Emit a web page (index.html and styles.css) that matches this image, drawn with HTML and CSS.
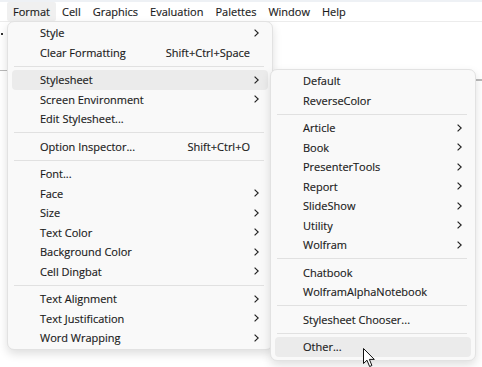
FILE: index.html
```html
<!DOCTYPE html>
<html lang="en">

<head>
    <meta charset="UTF-8">
    <title>Format menu</title>
    <link rel="stylesheet" href="styles.css">
</head>

<body>
    <div class="top-strip"></div>
    <nav class="menubar">
        <span class="menubar-item active">Format</span>
        <span class="menubar-item">Cell</span>
        <span class="menubar-item">Graphics</span>
        <span class="menubar-item">Evaluation</span>
        <span class="menubar-item">Palettes</span>
        <span class="menubar-item">Window</span>
        <span class="menubar-item">Help</span>
    </nav>

    <div class="notebook">
        <span class="cell-dot"></span>
        <span class="cell-line left-line"></span>
        <span class="cell-line right-line"></span>
    </div>

    <!-- Format menu -->
    <div class="menu format-menu">
        <div class="menu-row"><span class="label">Style</span><span class="arrow"><svg width="5" height="8" viewBox="0 0 5 8"><polyline points="0.6,0.6 4.2,4 0.6,7.4" /></svg></span></div>
        <div class="menu-row"><span class="label">Clear Formatting</span><span class="shortcut">Shift+Ctrl+Space</span><span class="arrow"></span></div>
        <div class="separator"></div>
        <div class="menu-row selected"><span class="label">Stylesheet</span><span class="arrow"><svg width="5" height="8" viewBox="0 0 5 8"><polyline points="0.6,0.6 4.2,4 0.6,7.4" /></svg></span></div>
        <div class="menu-row"><span class="label">Screen Environment</span><span class="arrow"><svg width="5" height="8" viewBox="0 0 5 8"><polyline points="0.6,0.6 4.2,4 0.6,7.4" /></svg></span></div>
        <div class="menu-row"><span class="label">Edit Stylesheet...</span><span class="arrow"></span></div>
        <div class="separator"></div>
        <div class="menu-row"><span class="label">Option Inspector...</span><span class="shortcut">Shift+Ctrl+O</span><span class="arrow"></span></div>
        <div class="separator"></div>
        <div class="menu-row"><span class="label">Font...</span><span class="arrow"></span></div>
        <div class="menu-row"><span class="label">Face</span><span class="arrow"><svg width="5" height="8" viewBox="0 0 5 8"><polyline points="0.6,0.6 4.2,4 0.6,7.4" /></svg></span></div>
        <div class="menu-row"><span class="label">Size</span><span class="arrow"><svg width="5" height="8" viewBox="0 0 5 8"><polyline points="0.6,0.6 4.2,4 0.6,7.4" /></svg></span></div>
        <div class="menu-row"><span class="label">Text Color</span><span class="arrow"><svg width="5" height="8" viewBox="0 0 5 8"><polyline points="0.6,0.6 4.2,4 0.6,7.4" /></svg></span></div>
        <div class="menu-row"><span class="label">Background Color</span><span class="arrow"><svg width="5" height="8" viewBox="0 0 5 8"><polyline points="0.6,0.6 4.2,4 0.6,7.4" /></svg></span></div>
        <div class="menu-row"><span class="label">Cell Dingbat</span><span class="arrow"><svg width="5" height="8" viewBox="0 0 5 8"><polyline points="0.6,0.6 4.2,4 0.6,7.4" /></svg></span></div>
        <div class="separator"></div>
        <div class="menu-row"><span class="label">Text Alignment</span><span class="arrow"><svg width="5" height="8" viewBox="0 0 5 8"><polyline points="0.6,0.6 4.2,4 0.6,7.4" /></svg></span></div>
        <div class="menu-row"><span class="label">Text Justification</span><span class="arrow"><svg width="5" height="8" viewBox="0 0 5 8"><polyline points="0.6,0.6 4.2,4 0.6,7.4" /></svg></span></div>
        <div class="menu-row"><span class="label">Word Wrapping</span><span class="arrow"><svg width="5" height="8" viewBox="0 0 5 8"><polyline points="0.6,0.6 4.2,4 0.6,7.4" /></svg></span></div>
    </div>

    <!-- Stylesheet submenu -->
    <div class="menu stylesheet-menu">
        <div class="menu-row"><span class="label">Default</span><span class="arrow"></span></div>
        <div class="menu-row"><span class="label">ReverseColor</span><span class="arrow"></span></div>
        <div class="separator"></div>
        <div class="menu-row"><span class="label">Article</span><span class="arrow"><svg width="5" height="8" viewBox="0 0 5 8"><polyline points="0.6,0.6 4.2,4 0.6,7.4" /></svg></span></div>
        <div class="menu-row"><span class="label">Book</span><span class="arrow"><svg width="5" height="8" viewBox="0 0 5 8"><polyline points="0.6,0.6 4.2,4 0.6,7.4" /></svg></span></div>
        <div class="menu-row"><span class="label">PresenterTools</span><span class="arrow"><svg width="5" height="8" viewBox="0 0 5 8"><polyline points="0.6,0.6 4.2,4 0.6,7.4" /></svg></span></div>
        <div class="menu-row"><span class="label">Report</span><span class="arrow"><svg width="5" height="8" viewBox="0 0 5 8"><polyline points="0.6,0.6 4.2,4 0.6,7.4" /></svg></span></div>
        <div class="menu-row"><span class="label">SlideShow</span><span class="arrow"><svg width="5" height="8" viewBox="0 0 5 8"><polyline points="0.6,0.6 4.2,4 0.6,7.4" /></svg></span></div>
        <div class="menu-row"><span class="label">Utility</span><span class="arrow"><svg width="5" height="8" viewBox="0 0 5 8"><polyline points="0.6,0.6 4.2,4 0.6,7.4" /></svg></span></div>
        <div class="menu-row"><span class="label">Wolfram</span><span class="arrow"><svg width="5" height="8" viewBox="0 0 5 8"><polyline points="0.6,0.6 4.2,4 0.6,7.4" /></svg></span></div>
        <div class="separator"></div>
        <div class="menu-row"><span class="label">Chatbook</span><span class="arrow"></span></div>
        <div class="menu-row"><span class="label">WolframAlphaNotebook</span><span class="arrow"></span></div>
        <div class="separator"></div>
        <div class="menu-row"><span class="label">Stylesheet Chooser...</span><span class="arrow"></span></div>
        <div class="separator"></div>
        <div class="menu-row selected"><span class="label">Other...</span><span class="arrow"></span></div>
    </div>

    <svg class="cursor" width="13" height="20" viewBox="0 0 13 20">
        <path d="M0.5,0.5 L0.5,15.5 L4,12.2 L6.6,18.5 L8.9,17.5 L6.4,11.4 L11.3,11.4 Z" />
    </svg>
</body>

</html>
```

FILE: styles.css
```css
:root {
    --text-color: #1a1a1a;
    --menu-bg: #f9f9f9;
    --menu-border: #e2e2e2;
    --hover-bg: #ebebeb;
    --separator: #e1e1e1;
    --row-height: 19.5px;
}

body {
    margin: 0;
    width: 482px;
    height: 367px;
    overflow: hidden;
    background: #ffffff;
    font-family: 'Open Sans', 'Noto Sans', sans-serif;
    font-size: 11px;
    color: var(--text-color);
    -webkit-text-stroke: 0.15px #1a1a1a;
}

.top-strip {
    height: 2px;
    background: #eef1f5;
}

.menubar {
    display: flex;
    height: 19px;
    padding-left: 7px;
    border-bottom: 1px solid #ececec;
}

.menubar-item {
    display: flex;
    align-items: center;
    padding: 0 6px;
    line-height: 18px;
    border-radius: 2px;
}

.menubar-item.active {
    background: #f0f0f0;
}

/* faint bits of the notebook behind the menus */
.notebook {
    position: relative;
}

.cell-dot {
    position: absolute;
    left: 1px;
    top: 11px;
    width: 2px;
    height: 2px;
    background: #333;
}

.cell-line {
    position: absolute;
    height: 1px;
    background: #b9b9b9;
}

.left-line {
    left: 0;
    top: 48px;
    width: 8px;
}

.right-line {
    left: 474px;
    top: 57px;
    width: 8px;
    height: 2px;
}

.menu {
    position: absolute;
    box-sizing: border-box;
    background: var(--menu-bg);
    border: 1px solid var(--menu-border);
    border-radius: 7px;
    box-shadow: 0 4px 10px rgba(0, 0, 0, 0.13);
    padding: 1px 0 3px;
}

.format-menu {
    left: 7px;
    top: 21px;
    width: 266px;
    height: 329px;
}

.stylesheet-menu {
    left: 270px;
    top: 69px;
    width: 206px;
    height: 292px;
}

.menu-row {
    display: flex;
    align-items: center;
    height: var(--row-height);
    margin: 0 4px;
    padding: 0 9px 0 28px;
    border-radius: 4px;
    white-space: nowrap;
}

.menu-row.selected {
    background: var(--hover-bg);
}

.label {
    flex: 1;
}

.shortcut {
    margin-left: 12px;
}

.arrow {
    display: flex;
    justify-content: flex-end;
    width: 9px;
}

.arrow polyline {
    fill: none;
    stroke: #222;
    stroke-width: 1.2;
}

.separator {
    height: 1px;
    margin: 3.5px 8px 3.5px 6px;
    background: var(--separator);
}

.cursor {
    position: absolute;
    left: 363px;
    top: 348px;
}

.cursor path {
    fill: #ffffff;
    stroke: #111;
    stroke-width: 1;
}
```
